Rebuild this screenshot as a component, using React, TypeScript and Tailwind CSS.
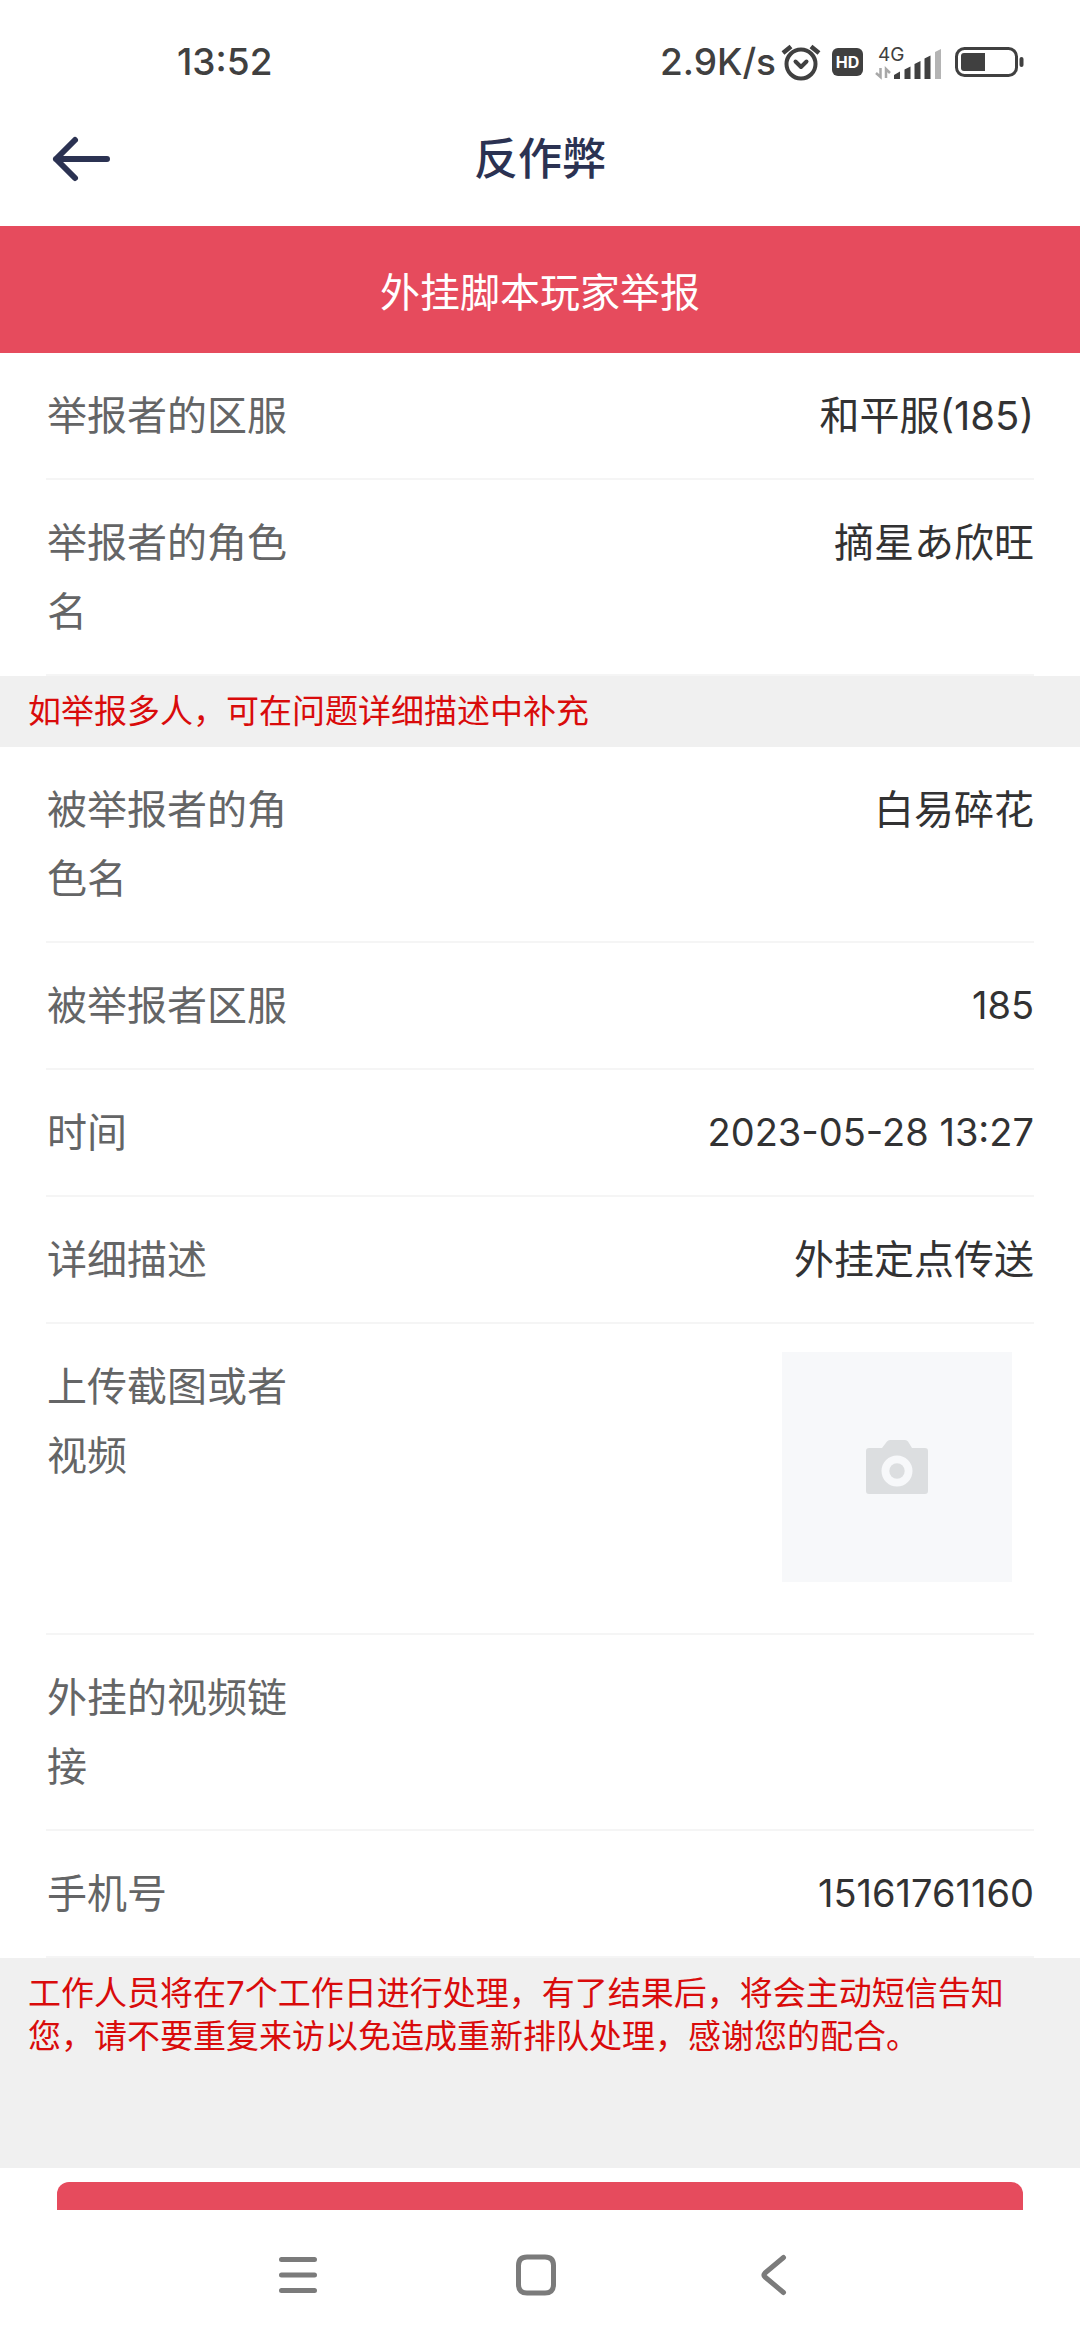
import React from 'react';

type Field = {
  id: string;
  label: string;
  value: string;
  numeric?: boolean;
};

const reporterFields: Field[] = [
  { id: 'reporter-server', label: '举报者的区服', value: '和平服(185)' },
  { id: 'reporter-role', label: '举报者的角色名', value: '摘星あ欣旺' },
];

const reportedFields: Field[] = [
  { id: 'reported-role', label: '被举报者的角色名', value: '白易碎花' },
  { id: 'reported-server', label: '被举报者区服', value: '185', numeric: true },
  { id: 'time', label: '时间', value: '2023-05-28 13:27', numeric: true },
  { id: 'detail', label: '详细描述', value: '外挂定点传送' },
];

const contactFields: Field[] = [
  { id: 'video-link', label: '外挂的视频链接', value: '' },
  { id: 'phone', label: '手机号', value: '15161761160', numeric: true },
];

const StatusBar: React.FC = () => (
  <div className="flex h-[92px] shrink-0 items-center justify-between pt-8 pr-[55px] pl-[177px] text-[37px] font-medium text-[#404040]">
    <span>13:52</span>
    <div className="flex items-center">
      <span>2.9K/s</span>
      {/* Alarm */}
      <svg width="48" height="40" viewBox="0 0 48 40" fill="none" stroke="#404040" strokeWidth="4" strokeLinecap="round" strokeLinejoin="round">
        <circle cx="25" cy="22" r="14.5" />
        <path d="M19.5 19.5L25 25l5.5-5.5" />
        <path d="M7 11l8-6.5M43 11l-8-6.5" strokeLinecap="butt" strokeWidth="4.5" />
      </svg>
      {/* HD voice */}
      <span className="ml-2 flex h-7 w-[31px] items-center justify-center rounded-md bg-[#404040] text-[16px] font-bold text-white">
        HD
      </span>
      {/* Mobile signal */}
      <svg className="ml-3" width="66" height="36" viewBox="0 0 66 36">
        <text x="3" y="17" fontSize="19" fontWeight="400" fill="#404040">4G</text>
        <path d="M5.5 24v9L1 29M11 34v-9l4 4" fill="none" stroke="#a8a8a8" strokeWidth="2.5" />
        <path d="M19 31l6-3.5V35h-6z" fill="#404040" />
        <path d="M29.5 25.5l6-3V35h-6z" fill="#404040" />
        <path d="M39.5 20l6-3V35h-6z" fill="#404040" />
        <path d="M49.5 14.5l6-3V35h-6z" fill="#404040" />
        <path d="M60 8l6-3v30h-6z" fill="#b4b4b4" />
      </svg>
      {/* Battery */}
      <svg className="ml-3.5" width="70" height="30" viewBox="0 0 70 30">
        <rect x="1.5" y="1.5" width="60" height="27" rx="8" fill="none" stroke="#404040" strokeWidth="3" />
        <path d="M9 6h21v18H9a3 3 0 0 1-3-3V9a3 3 0 0 1 3-3z" fill="#404040" />
        <rect x="64.5" y="10" width="4" height="10" rx="2" fill="#404040" />
      </svg>
    </div>
  </div>
);

const FieldRow: React.FC<{ field: Field }> = ({ field }) => (
  <div className="mx-[46px] flex items-start justify-between border-b-2 border-[#f5f5f5] py-7">
    <label htmlFor={field.id} className="w-[250px] shrink-0 pl-px leading-[69px] text-[#646566]">
      {field.label}
    </label>
    <input
      id={field.id}
      type="text"
      defaultValue={field.value}
      className={`h-[69px] min-w-0 flex-1 bg-transparent text-right leading-[69px] text-[#323233] outline-none ${
        field.numeric ? 'text-[38px]' : 'text-[40px]'
      }`}
    />
  </div>
);

const Notice: React.FC<{ children: React.ReactNode; className?: string }> = ({ children, className = '' }) => (
  <p className={`bg-[#f0f0f0] py-3.5 pr-11 pl-7 text-[33px] leading-[43px] text-[#d90b0b] ${className}`}>
    {children}
  </p>
);

const App: React.FC = () => {
  return (
    <div className="flex h-screen flex-col bg-white font-[Inter,'Noto_Sans_CJK_SC',sans-serif] text-[40px]">
      <StatusBar />

      {/* Header */}
      <header className="grid h-[134px] shrink-0 grid-cols-[1fr_auto_1fr] items-center px-[51px] text-[#2b3252]">
        <button type="button" aria-label="返回" className="justify-self-start">
          <svg width="60" height="48" viewBox="0 0 60 48" fill="none" stroke="currentColor" strokeWidth="6" strokeLinecap="round" strokeLinejoin="round">
            <path d="M56 24H5M24 5L5 24l19 19" />
          </svg>
        </button>
        <h1 className="text-[44px] font-medium">反作弊</h1>
      </header>

      <main className="min-h-0 flex-1 overflow-y-auto [scrollbar-width:none]">
        <h2 className="bg-[#e64b5d] pt-1.5 text-center leading-[121px] text-white">外挂脚本玩家举报</h2>

        <form>
          {reporterFields.map((field) => (
            <FieldRow key={field.id} field={field} />
          ))}

          <Notice>如举报多人，可在问题详细描述中补充</Notice>

          {reportedFields.map((field) => (
            <FieldRow key={field.id} field={field} />
          ))}

          {/* Upload */}
          <div className="mx-[46px] flex items-start justify-between border-b-2 border-[#f5f5f5] py-7">
            <label htmlFor="upload" className="w-[250px] shrink-0 pl-px leading-[69px] text-[#646566]">
              上传截图或者视频
            </label>
            <button
              id="upload"
              type="button"
              className="mr-[22px] mb-[23px] flex size-[230px] items-center justify-center bg-[#f7f8fa]"
            >
              <svg width="62" height="54" viewBox="0 0 62 54" fill="#dcdee0">
                <path
                  fillRule="evenodd"
                  d="M3 8h13l5-6.5Q22 0 24 0h15q2 0 3 1.5L46 8h13a3 3 0 0 1 3 3v40a3 3 0 0 1-3 3H3a3 3 0 0 1-3-3V11a3 3 0 0 1 3-3zM31 15.5a15.5 15.5 0 1 0 0 31a15.5 15.5 0 1 0 0-31z"
                />
                <circle cx="31" cy="31" r="7.7" />
              </svg>
            </button>
          </div>

          {contactFields.map((field) => (
            <FieldRow key={field.id} field={field} />
          ))}

          <Notice className="min-h-[210px]">
            工作人员将在7个工作日进行处理，有了结果后，将会主动短信告知您，请不要重复来访以免造成重新排队处理，感谢您的配合。
          </Notice>

          <div className="px-[57px] py-3.5">
            <button type="submit" aria-label="提交" className="block h-28 w-full rounded-xl bg-[#e64b5d]" />
          </div>
        </form>
      </main>

      {/* System navigation */}
      <nav className="flex h-[130px] shrink-0 items-center justify-center gap-[190px] pr-2 text-[#7b7b7b]">
        <button type="button" aria-label="菜单">
          <svg width="48" height="48" viewBox="0 0 48 48" fill="none" stroke="currentColor" strokeWidth="5" strokeLinecap="round">
            <path d="M7.5 8.5h33M7.5 24h33M7.5 39.500h33" />
          </svg>
        </button>
        <button type="button" aria-label="主页">
          <svg width="48" height="48" viewBox="0 0 48 48" fill="none" stroke="currentColor" strokeWidth="5">
            <path d="M15 6h18q8.500 0 8.500 8.500v19q0 8.500-8.500 8.500H15q-8.500 0-8.500-8.500v-19Q6.500 6 15 6z" />
          </svg>
        </button>
        <button type="button" aria-label="后退">
          <svg width="48" height="48" viewBox="0 0 48 48" fill="none" stroke="currentColor" strokeWidth="5" strokeLinecap="round" strokeLinejoin="round">
            <path d="M33.5 6.5L15 22q-2 2 0 4l18.5 15.5" />
          </svg>
        </button>
      </nav>
    </div>
  );
};

export default App;
